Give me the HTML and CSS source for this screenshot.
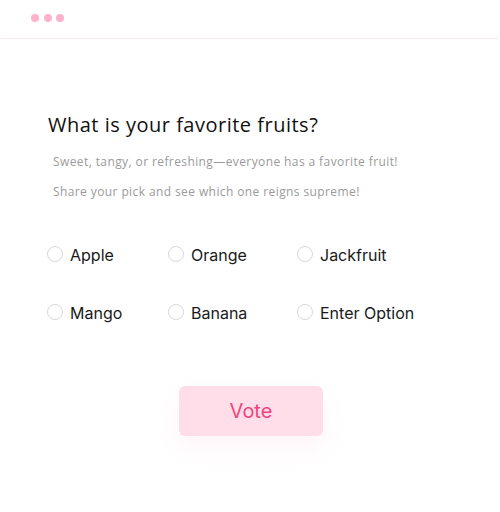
FILE: index.html
```html
<!DOCTYPE html>
<html>
<head>
<meta charset="utf-8">
<link rel="stylesheet" href="styles.css">
</head>
<body>
<div class="card">
  <div class="topbar">
    <span class="dot"></span><span class="dot"></span><span class="dot"></span>
  </div>
  <div class="content">
    <h1 class="title">What is your favorite fruits?</h1>
    <p class="sub">Sweet, tangy, or refreshing—everyone has a favorite fruit!</p>
    <p class="sub">Share your pick and see which one reigns supreme!</p>
    <div class="options">
      <label class="opt"><span class="radio"></span>Apple</label>
      <label class="opt"><span class="radio"></span>Orange</label>
      <label class="opt"><span class="radio"></span>Jackfruit</label>
      <label class="opt"><span class="radio"></span>Mango</label>
      <label class="opt"><span class="radio"></span>Banana</label>
      <label class="opt"><span class="radio"></span>Enter Option</label>
    </div>
    <div class="actions">
      <button class="vote">Vote</button>
    </div>
  </div>
</div>
</body>
</html>
```
FILE: styles.css
```css
* { box-sizing: border-box; }
html, body { margin: 0; padding: 0; background: #fff; }
body { width: 500px; height: 512px; overflow: hidden; font-family: Inter, "Liberation Sans", sans-serif; }
.card { width: 500px; height: 512px; }
.topbar {
  height: 39px;
  border-bottom: 1px solid #fde6ee;
  margin: 0 1px;
  display: flex;
  align-items: center;
  gap: 4.5px;
  padding-left: 30px;
  padding-bottom: 2px;
}
.dot { width: 8px; height: 8px; border-radius: 50%; background: #ffb2cd; }
.content { padding: 73px 0 0 48px; }
.title {
  margin: 0 0 15px;
  font-family: "Open Sans", sans-serif;
  font-weight: 500;
  font-size: 20px;
  letter-spacing: 0.5px;
  line-height: 25px;
  color: #111;
}
.sub {
  margin: 0 0 11px 5px;
  font-family: "Open Sans", sans-serif;
  font-size: 12px;
  letter-spacing: 0.4px;
  line-height: 19px;
  color: #9a9a9a;
}
.options {
  display: grid;
  grid-template-columns: 121px 129px 140px;
  row-gap: 35px;
  margin-top: 43px;
  margin-left: -1px;
}
.opt { display: flex; align-items: center; gap: 7px; font-size: 16px; color: #1a1a1a; line-height: 23px; }
.radio { width: 16px; height: 16px; border: 1px solid #d8d8d8; border-radius: 50%; margin-top: -4px; }
.actions { display: flex; padding-left: 131px; margin-top: 61px; }
.vote {
  width: 144px; height: 50px;
  border: none; border-radius: 6px;
  background: #ffdeea;
  color: #f2437d;
  font-family: Inter, sans-serif;
  font-size: 20px;
  box-shadow: 0 12px 24px rgba(255, 200, 220, 0.2);
}
```
